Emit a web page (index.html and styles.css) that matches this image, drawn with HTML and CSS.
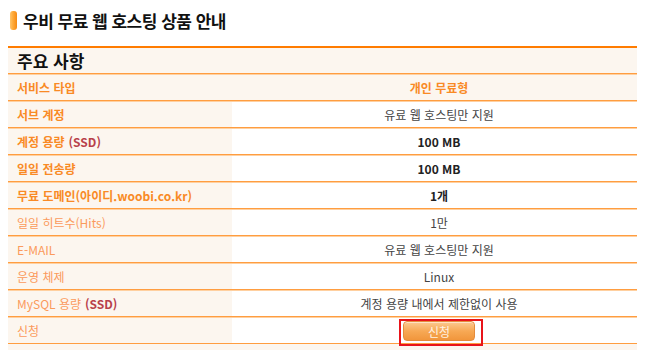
FILE: index.html
```html
<!DOCTYPE html>
<html lang="ko">
<head>
<meta charset="utf-8">
<title>우비 무료 웹 호스팅 상품 안내</title>
<link rel="stylesheet" href="styles.css">
</head>
<body>
<div class="page">
  <h1 class="title"><span class="title-icon"></span>우비 무료 웹 호스팅 상품 안내</h1>
  <div class="spec">
    <div class="row head"><div class="head-cell">주요 사항</div></div>
    <div class="row full">
      <div class="label b">서비스 타입</div>
      <div class="value type">개인 무료형</div>
    </div>
    <div class="row">
      <div class="label b">서브 계정</div>
      <div class="value">유료 웹 호스팅만 지원</div>
    </div>
    <div class="row">
      <div class="label b">계정 용량 <span class="ssd">(SSD)</span></div>
      <div class="value b">100 MB</div>
    </div>
    <div class="row">
      <div class="label b">일일 전송량</div>
      <div class="value b">100 MB</div>
    </div>
    <div class="row">
      <div class="label b">무료 도메인(아이디.woobi.co.kr)</div>
      <div class="value b">1개</div>
    </div>
    <div class="row">
      <div class="label">일일 히트수(Hits)</div>
      <div class="value">1만</div>
    </div>
    <div class="row">
      <div class="label">E-MAIL</div>
      <div class="value">유료 웹 호스팅만 지원</div>
    </div>
    <div class="row">
      <div class="label">운영 체제</div>
      <div class="value">Linux</div>
    </div>
    <div class="row">
      <div class="label">MySQL 용량 <span class="ssd">(SSD)</span></div>
      <div class="value">계정 용량 내에서 제한없이 사용</div>
    </div>
    <div class="row">
      <div class="label">신청</div>
      <div class="value"><button class="apply" type="button">신청</button></div>
    </div>
    <div class="tail"></div>
  </div>
</div>
</body>
</html>
```

FILE: styles.css
```css
html, body {
  margin: 0;
  padding: 0;
  background: #ffffff;
}

body {
  font-family: "Noto Sans CJK KR", sans-serif;
  font-size: 12px;
  color: #444444;
}

.page {
  width: 629px;
  padding: 5px 8px 0 8px;
}

.title {
  display: flex;
  align-items: center;
  gap: 6px;
  height: 30px;
  margin: 0 0 11px 0;
  padding-left: 2px;
  font-size: 17px;
  font-weight: bold;
  color: #111111;
  letter-spacing: -0.5px;
}

.title-icon {
  display: block;
  width: 7px;
  height: 19px;
  border-radius: 3px;
  background: linear-gradient(90deg, #ffc46a 0%, #ffab3a 40%, #f58a12 100%);
}

.spec {
  display: flex;
  flex-direction: column;
}

.row {
  display: grid;
  grid-template-columns: 224px 1fr;
  box-sizing: border-box;
  height: 27px;
  border-top: 1px solid #ffd0a0;
  border-bottom: 1px solid #ff9d40;
}

.row.head {
  display: flex;
  height: 28px;
  border-top: 2px solid #ff7c00;
  background: #fcf6ef;
}

.row.full {
  background: #fcf6ef;
}

.head-cell {
  display: flex;
  align-items: center;
  padding-left: 9px;
  font-size: 17px;
  font-weight: bold;
  color: #111111;
}

.label {
  display: flex;
  align-items: center;
  padding-left: 9px;
  background: #fcf6ef;
  color: #fb9a5c;
  white-space: nowrap;
}

.label.b {
  color: #f98a25;
  font-weight: bold;
}

.ssd {
  color: #b8404a;
  font-weight: bold;
  margin-left: 4px;
}

.value {
  display: flex;
  align-items: center;
  justify-content: center;
  padding-left: 9px;
  color: #444444;
}

.value.b {
  font-weight: bold;
  color: #222222;
}

.value.type {
  font-weight: bold;
  color: #f98a25;
}

.apply {
  position: relative;
  width: 72px;
  height: 20px;
  margin-top: 1px;
  border: 1px solid #e58c3c;
  border-radius: 4px;
  background: linear-gradient(#fcc990 0%, #f7a955 50%, #f1963c 100%);
  color: #fff3e4;
  font-family: "Noto Sans CJK KR", sans-serif;
  font-size: 12px;
  padding: 0;
  box-shadow: inset 0 1px 0 rgba(255,255,255,0.5);
}

.apply::after {
  content: "";
  position: absolute;
  left: -5px;
  top: -3px;
  right: -9px;
  bottom: -6px;
  border: 2px solid #e8141a;
}

.tail {
  height: 8px;
  background: #fcf6ef;
}
```
